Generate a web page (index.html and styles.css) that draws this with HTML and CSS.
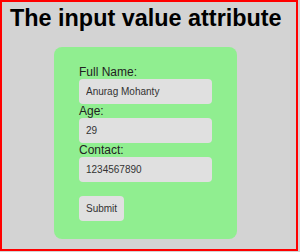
FILE: index.html
```html
<!DOCTYPE html>
<html lang="en">
<head>
  <meta charset="UTF-8">
  <meta name="viewport" content="width=device-width, initial-scale=1.0">
  <title>The input value attribute</title>
  <link rel="stylesheet" href="styles.css">
</head>
<body>
  <h1>The input value attribute</h1>

  <form class="card">
    <label for="fname">Full Name:</label>
    <input type="text" id="fname" name="fname" value="Anurag Mohanty">

    <label for="age">Age:</label>
    <input type="text" id="age" name="age" value="29">

    <label for="contact">Contact:</label>
    <input type="text" id="contact" name="contact" value="1234567890">

    <button type="submit">Submit</button>
  </form>
</body>
</html>
```

FILE: styles.css
```css
body {
  box-sizing: border-box;
  width: 298px;
  height: 251px;
  margin: 0;
  padding: 0 8px;
  border: 2px solid red;
  background-color: lightgray;
  font-family: 'Liberation Sans', Arial, sans-serif;
}

h1 {
  margin: 3px 0 15px;
  font-size: 23.4px;
  white-space: nowrap;
  color: #000;
}

.card {
  width: 133px;
  margin-left: 44px;
  padding: 18px 25px;
  background-color: lightgreen;
  border-radius: 8px;
}

label {
  display: block;
  font-size: 12px;
  line-height: 14px;
  color: #222;
}

input {
  display: block;
  box-sizing: border-box;
  width: 100%;
  height: 25px;
  margin: 0;
  padding: 0 7px;
  border: none;
  border-radius: 4px;
  background-color: #e0e0e0;
  font-family: 'Liberation Sans', Arial, sans-serif;
  font-size: 10px;
  color: #333;
  outline: none;
}

button {
  display: block;
  height: 25px;
  margin-top: 14px;
  padding: 0 7px;
  border: none;
  border-radius: 4px;
  background-color: #e0e0e0;
  font-family: 'Liberation Sans', Arial, sans-serif;
  font-size: 10px;
  color: #333;
  cursor: pointer;
}
```
